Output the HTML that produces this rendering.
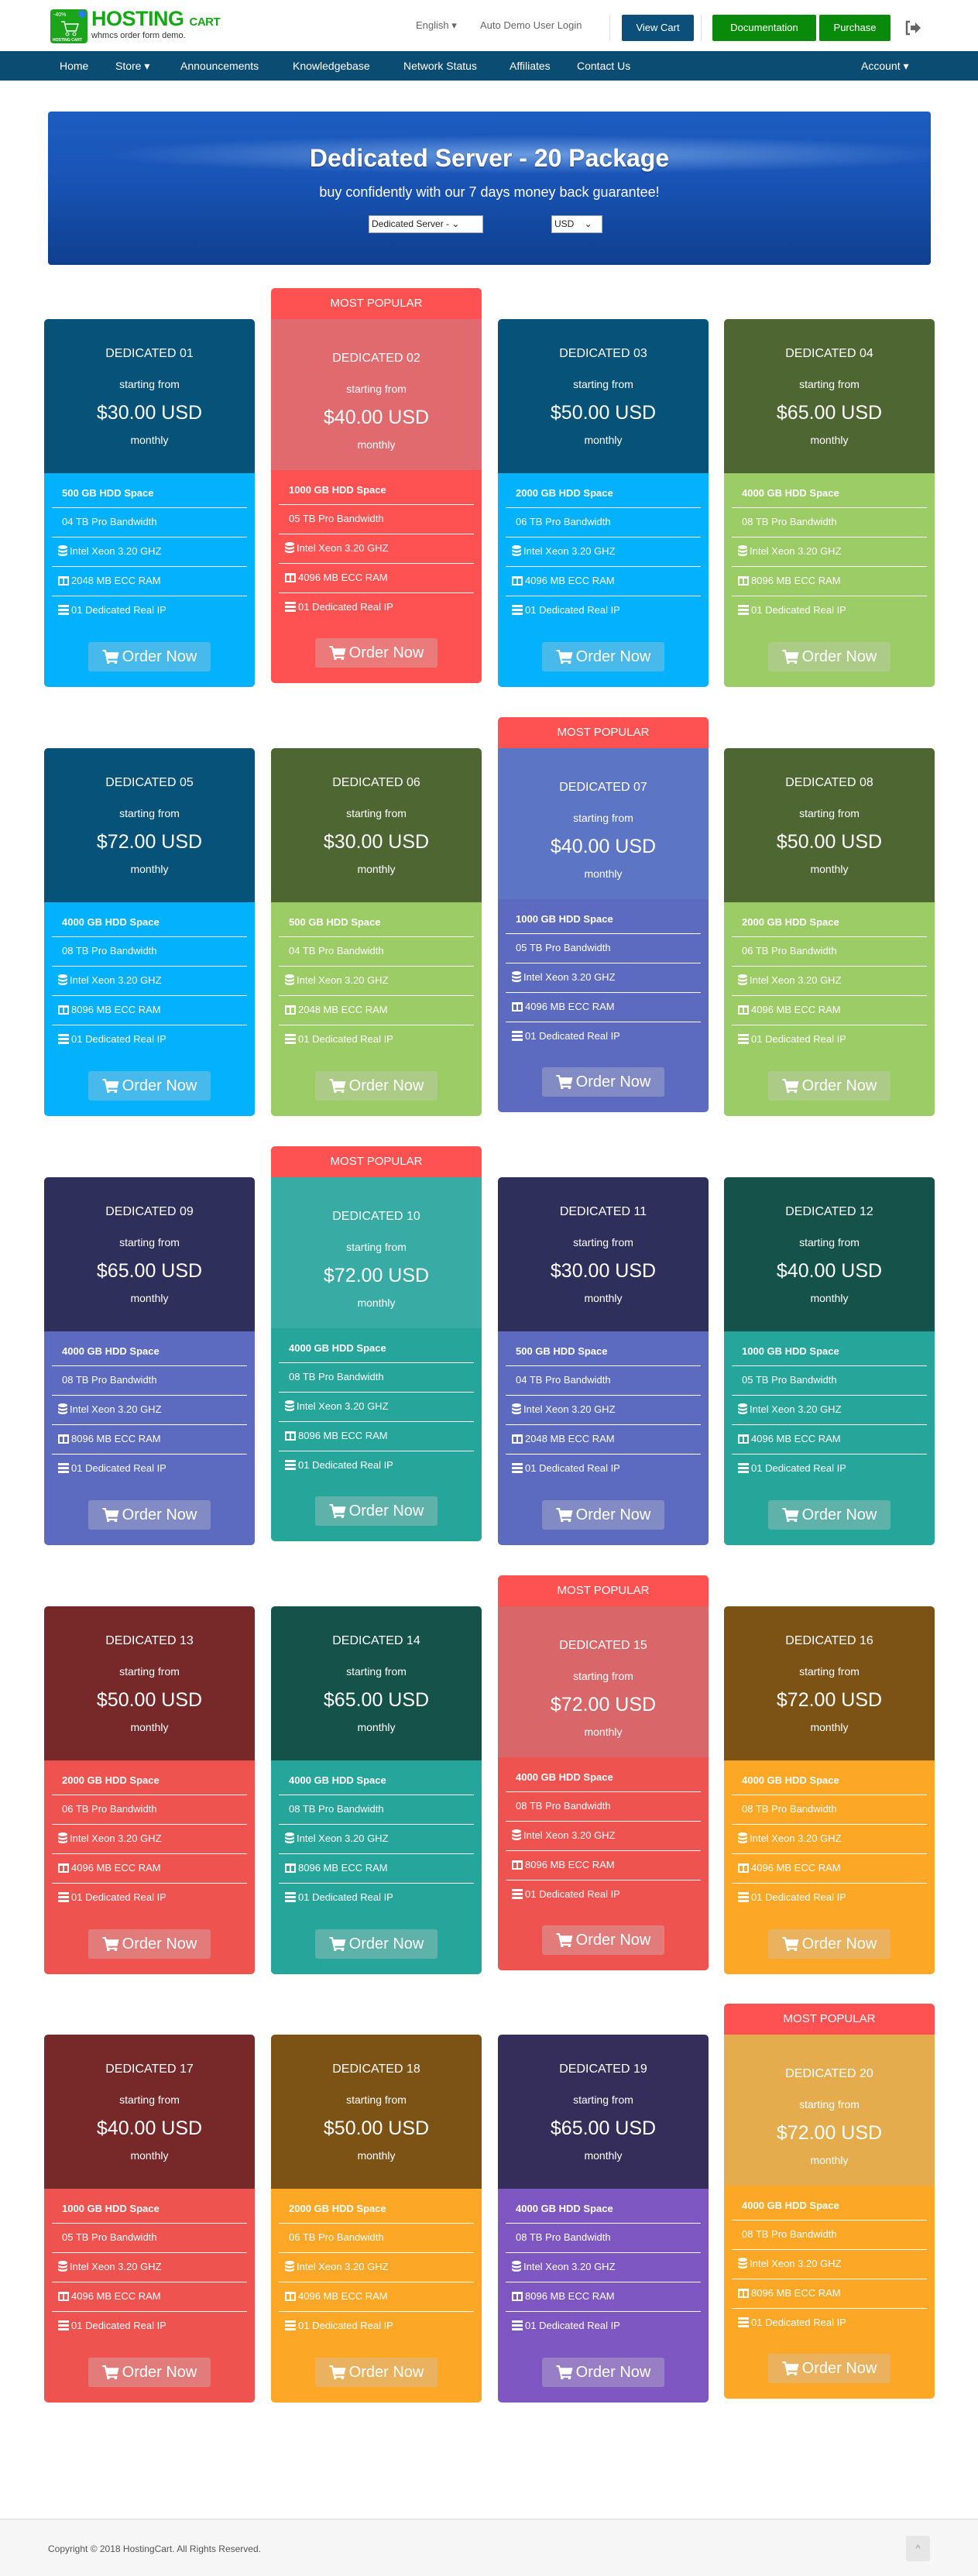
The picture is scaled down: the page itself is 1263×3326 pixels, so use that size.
<!DOCTYPE html>
<html><head><meta charset="utf-8">
<style>
*{box-sizing:border-box;margin:0;padding:0}
body{width:1263px;height:3326px;position:relative;background:#fff;font-family:"Liberation Sans",sans-serif;color:#fff;overflow:hidden}
.abs{position:absolute}
.logo{left:65px;top:12px;width:48px;height:44px;background:#1aa51a;border-radius:4px}
.brand{left:118px;top:9px;color:#13a913;font-weight:bold;font-size:27px;letter-spacing:-0.5px}
.brand small{font-size:15px}
.tag{left:118px;top:40px;color:#333;font-size:11px}
.tl{top:25px;font-size:13px;color:#666}
.btn{top:19px;height:34px;line-height:34px;font-size:13px;color:#fff;text-align:center;border-radius:2px}
.sep{top:19px;width:1px;height:34px;background:#ddd}
.nav{left:0;top:66px;width:1263px;height:38px;background:#0b4c72}
.nav span{position:absolute;top:11px;font-size:14px;color:#fff}
.banner{left:62px;top:144px;width:1140px;height:198px;border-radius:4px;overflow:hidden;
background:radial-gradient(ellipse 70% 18% at 55% 28%,rgba(170,210,255,.55),rgba(90,150,230,0) 70%),linear-gradient(180deg,#1d5cc0 0%,#1a55b8 40%,#134aa3 70%,#0f3f8e 100%)}
.banner h1{position:absolute;top:42px;width:100%;text-align:center;font-size:32px;font-weight:bold;text-shadow:0 1px 2px rgba(0,0,0,.4)}
.banner p{position:absolute;top:94px;width:100%;text-align:center;font-size:18px}
.sel{position:absolute;top:134px;height:23px;background:#fff;border:1px solid #aaa;color:#222;font-size:12px;line-height:21px;padding-left:3px}
.card{position:absolute;width:272px;border-radius:5px;overflow:visible}
.hd{position:relative;height:199px;border-radius:5px 5px 0 0;text-align:center}
.hd .t{position:absolute;top:36px;width:100%;font-size:16px}
.hd .s{position:absolute;top:76px;width:100%;font-size:14px}
.hd .p{position:absolute;top:107px;width:100%;font-size:25px}
.hd .m{position:absolute;top:148px;width:100%;font-size:14px}
.bd{position:relative;height:276px;border-radius:0 0 5px 5px}
.f{position:absolute;left:10px;width:252px;height:38px;line-height:36px;font-size:13px;padding-left:13px}
.f.b{border-bottom:1px solid #fff}
.f svg{vertical-align:-2px;margin-right:3px;margin-left:-5px}
.ob{position:absolute;left:57px;top:218px;width:158px;height:38px;border-radius:3px;background:rgba(200,200,200,.35);font-size:20px;line-height:38px;text-align:center}
.ob svg{vertical-align:-3px;margin-right:4px}
.tab{position:absolute;top:-40px;left:0;width:272px;height:40px;background:#fe5252;border-radius:5px 5px 0 0;text-align:center;line-height:40px;font-size:15px}
.pop .hd{height:195px;border-radius:0}
.pop .hd .t{top:42px}.pop .hd .s{top:82px}.pop .hd .p{top:113px}.pop .hd .m{top:154px}
.pop .bd{height:275px}
.pop .ob{top:217px}
.footer{left:0;top:3252px;width:1263px;height:74px;background:#f6f6f6;border-top:1px solid #ddd}
</style></head><body>
<div class="abs logo"><svg width="48" height="44" viewBox="0 0 48 44"><text x="4" y="9" font-size="7" fill="#fff" font-family="Liberation Sans">-40%</text><circle cx="41" cy="6" r="5" fill="#2a7de1"/><path d="M14 16h4l3 12h12l3-9H19" stroke="#fff" stroke-width="1.5" fill="none"/><circle cx="22" cy="32" r="2" fill="none" stroke="#fff"/><circle cx="31" cy="32" r="2" fill="none" stroke="#fff"/><text x="3" y="41" font-size="5" fill="#fff" font-family="Liberation Sans" font-weight="bold">HOSTING CART</text></svg></div>
<div class="abs brand">HOSTING <small>CART</small></div>
<div class="abs tag">whmcs order form demo.</div>
<div class="abs tl" style="left:537px">English ▾</div>
<div class="abs tl" style="left:620px">Auto Demo User Login</div>
<div class="abs sep" style="left:787px"></div>
<div class="abs btn" style="left:803px;width:93px;background:#0b4f7a">View Cart</div>
<div class="abs sep" style="left:905px"></div>
<div class="abs btn" style="left:920px;width:134px;background:#0a8a0a">Documentation</div>
<div class="abs btn" style="left:1058px;width:92px;background:#0a8a0a">Purchase</div>
<svg class="abs" style="left:1168px;top:26px" width="22" height="20" viewBox="0 0 22 20"><path d="M7 2H3v16h4" stroke="#666" stroke-width="2.5" fill="none"/><path d="M8 7h6V3l7 7-7 7v-4H8z" fill="#666"/></svg>
<div class="abs nav"><span style="left:77px">Home</span><span style="left:149px">Store ▾</span><span style="left:233px">Announcements</span><span style="left:378px">Knowledgebase</span><span style="left:521px">Network Status</span><span style="left:658px">Affiliates</span><span style="left:745px">Contact Us</span><span style="left:1112px">Account ▾</span></div>
<div class="abs banner"><h1>Dedicated Server - 20 Package</h1><p>buy confidently with our 7 days money back guarantee!</p>
<div class="sel" style="left:414px;width:148px">Dedicated Server - ⌄</div><div class="sel" style="left:650px;width:66px">USD &nbsp;&nbsp;&nbsp;⌄</div></div>

<svg width="0" height="0" style="position:absolute"><defs>
<symbol id="db" viewBox="0 0 12 14"><ellipse cx="6" cy="2.5" rx="6" ry="2.5" fill="#fff"/><path d="M0 4.5c0 1.4 2.7 2.5 6 2.5s6-1.1 6-2.5V7c0 1.4-2.7 2.5-6 2.5S0 8.4 0 7zM0 9c0 1.4 2.7 2.5 6 2.5S12 10.4 12 9v2.5C12 12.9 9.3 14 6 14s-6-1.1-6-2.5z" fill="#fff"/></symbol>
<symbol id="col" viewBox="0 0 14 12"><path d="M0 0h14v12H0zM2 3v7h4V3zM8 3v7h4V3z" fill="#fff" fill-rule="evenodd"/></symbol>
<symbol id="srv" viewBox="0 0 14 13"><path d="M0 0h14v3H0zM0 5h14v3H0zM0 10h14v3H0z" fill="#fff"/></symbol>
<symbol id="cart" viewBox="0 0 20 18"><path d="M0 1h4l1 3h15l-2 8H6.5l.5 2h11v2H5.5L2.5 3H0z" fill="#fff"/><circle cx="7" cy="17" r="1.6" fill="#fff"/><circle cx="16" cy="17" r="1.6" fill="#fff"/></symbol>
</defs></svg>

<!-- ROW 1 -->
<div class="card" style="left:57px;top:412px"><div class="hd" style="background:#065279"><div class="t">DEDICATED 01</div><div class="s">starting from</div><div class="p">$30.00 USD</div><div class="m">monthly</div></div><div class="bd" style="background:#03b1fc"><div class="f b" style="top:8px;height:37px;font-weight:bold">500 GB HDD Space</div><div class="f b" style="top:45px">04 TB Pro Bandwidth</div><div class="f b" style="top:83px"><svg width="12" height="14"><use href="#db"/></svg>Intel Xeon 3.20 GHZ</div><div class="f b" style="top:121px"><svg width="14" height="12"><use href="#col"/></svg>2048 MB ECC RAM</div><div class="f" style="top:159px"><svg width="14" height="13"><use href="#srv"/></svg>01 Dedicated Real IP</div><div class="ob"><svg width="22" height="19"><use href="#cart"/></svg>Order Now</div></div></div>
<div class="card pop" style="left:350px;top:412px"><div class="tab">MOST POPULAR</div><div class="hd" style="background:#e06a6e"><div class="t">DEDICATED 02</div><div class="s">starting from</div><div class="p">$40.00 USD</div><div class="m">monthly</div></div><div class="bd" style="background:#fe5252"><div class="f b" style="top:8px;height:37px;font-weight:bold">1000 GB HDD Space</div><div class="f b" style="top:45px">05 TB Pro Bandwidth</div><div class="f b" style="top:83px"><svg width="12" height="14"><use href="#db"/></svg>Intel Xeon 3.20 GHZ</div><div class="f b" style="top:121px"><svg width="14" height="12"><use href="#col"/></svg>4096 MB ECC RAM</div><div class="f" style="top:159px"><svg width="14" height="13"><use href="#srv"/></svg>01 Dedicated Real IP</div><div class="ob"><svg width="22" height="19"><use href="#cart"/></svg>Order Now</div></div></div>
<div class="card" style="left:643px;top:412px"><div class="hd" style="background:#065279"><div class="t">DEDICATED 03</div><div class="s">starting from</div><div class="p">$50.00 USD</div><div class="m">monthly</div></div><div class="bd" style="background:#03b1fc"><div class="f b" style="top:8px;height:37px;font-weight:bold">2000 GB HDD Space</div><div class="f b" style="top:45px">06 TB Pro Bandwidth</div><div class="f b" style="top:83px"><svg width="12" height="14"><use href="#db"/></svg>Intel Xeon 3.20 GHZ</div><div class="f b" style="top:121px"><svg width="14" height="12"><use href="#col"/></svg>4096 MB ECC RAM</div><div class="f" style="top:159px"><svg width="14" height="13"><use href="#srv"/></svg>01 Dedicated Real IP</div><div class="ob"><svg width="22" height="19"><use href="#cart"/></svg>Order Now</div></div></div>
<div class="card" style="left:935px;top:412px"><div class="hd" style="background:#4e6631"><div class="t">DEDICATED 04</div><div class="s">starting from</div><div class="p">$65.00 USD</div><div class="m">monthly</div></div><div class="bd" style="background:#9ccc65"><div class="f b" style="top:8px;height:37px;font-weight:bold">4000 GB HDD Space</div><div class="f b" style="top:45px">08 TB Pro Bandwidth</div><div class="f b" style="top:83px"><svg width="12" height="14"><use href="#db"/></svg>Intel Xeon 3.20 GHZ</div><div class="f b" style="top:121px"><svg width="14" height="12"><use href="#col"/></svg>8096 MB ECC RAM</div><div class="f" style="top:159px"><svg width="14" height="13"><use href="#srv"/></svg>01 Dedicated Real IP</div><div class="ob"><svg width="22" height="19"><use href="#cart"/></svg>Order Now</div></div></div>

<!-- ROW 2 -->
<div class="card" style="left:57px;top:966px"><div class="hd" style="background:#065279"><div class="t">DEDICATED 05</div><div class="s">starting from</div><div class="p">$72.00 USD</div><div class="m">monthly</div></div><div class="bd" style="background:#03b1fc"><div class="f b" style="top:8px;height:37px;font-weight:bold">4000 GB HDD Space</div><div class="f b" style="top:45px">08 TB Pro Bandwidth</div><div class="f b" style="top:83px"><svg width="12" height="14"><use href="#db"/></svg>Intel Xeon 3.20 GHZ</div><div class="f b" style="top:121px"><svg width="14" height="12"><use href="#col"/></svg>8096 MB ECC RAM</div><div class="f" style="top:159px"><svg width="14" height="13"><use href="#srv"/></svg>01 Dedicated Real IP</div><div class="ob"><svg width="22" height="19"><use href="#cart"/></svg>Order Now</div></div></div>
<div class="card" style="left:350px;top:966px"><div class="hd" style="background:#4e6631"><div class="t">DEDICATED 06</div><div class="s">starting from</div><div class="p">$30.00 USD</div><div class="m">monthly</div></div><div class="bd" style="background:#9ccc65"><div class="f b" style="top:8px;height:37px;font-weight:bold">500 GB HDD Space</div><div class="f b" style="top:45px">04 TB Pro Bandwidth</div><div class="f b" style="top:83px"><svg width="12" height="14"><use href="#db"/></svg>Intel Xeon 3.20 GHZ</div><div class="f b" style="top:121px"><svg width="14" height="12"><use href="#col"/></svg>2048 MB ECC RAM</div><div class="f" style="top:159px"><svg width="14" height="13"><use href="#srv"/></svg>01 Dedicated Real IP</div><div class="ob"><svg width="22" height="19"><use href="#cart"/></svg>Order Now</div></div></div>
<div class="card pop" style="left:643px;top:966px"><div class="tab">MOST POPULAR</div><div class="hd" style="background:#5c75c4"><div class="t">DEDICATED 07</div><div class="s">starting from</div><div class="p">$40.00 USD</div><div class="m">monthly</div></div><div class="bd" style="background:#5c6bc0"><div class="f b" style="top:8px;height:37px;font-weight:bold">1000 GB HDD Space</div><div class="f b" style="top:45px">05 TB Pro Bandwidth</div><div class="f b" style="top:83px"><svg width="12" height="14"><use href="#db"/></svg>Intel Xeon 3.20 GHZ</div><div class="f b" style="top:121px"><svg width="14" height="12"><use href="#col"/></svg>4096 MB ECC RAM</div><div class="f" style="top:159px"><svg width="14" height="13"><use href="#srv"/></svg>01 Dedicated Real IP</div><div class="ob"><svg width="22" height="19"><use href="#cart"/></svg>Order Now</div></div></div>
<div class="card" style="left:935px;top:966px"><div class="hd" style="background:#4e6631"><div class="t">DEDICATED 08</div><div class="s">starting from</div><div class="p">$50.00 USD</div><div class="m">monthly</div></div><div class="bd" style="background:#9ccc65"><div class="f b" style="top:8px;height:37px;font-weight:bold">2000 GB HDD Space</div><div class="f b" style="top:45px">06 TB Pro Bandwidth</div><div class="f b" style="top:83px"><svg width="12" height="14"><use href="#db"/></svg>Intel Xeon 3.20 GHZ</div><div class="f b" style="top:121px"><svg width="14" height="12"><use href="#col"/></svg>4096 MB ECC RAM</div><div class="f" style="top:159px"><svg width="14" height="13"><use href="#srv"/></svg>01 Dedicated Real IP</div><div class="ob"><svg width="22" height="19"><use href="#cart"/></svg>Order Now</div></div></div>

<!-- ROW 3 -->
<div class="card" style="left:57px;top:1520px"><div class="hd" style="background:#2f2f5c"><div class="t">DEDICATED 09</div><div class="s">starting from</div><div class="p">$65.00 USD</div><div class="m">monthly</div></div><div class="bd" style="background:#5c6bc0"><div class="f b" style="top:8px;height:37px;font-weight:bold">4000 GB HDD Space</div><div class="f b" style="top:45px">08 TB Pro Bandwidth</div><div class="f b" style="top:83px"><svg width="12" height="14"><use href="#db"/></svg>Intel Xeon 3.20 GHZ</div><div class="f b" style="top:121px"><svg width="14" height="12"><use href="#col"/></svg>8096 MB ECC RAM</div><div class="f" style="top:159px"><svg width="14" height="13"><use href="#srv"/></svg>01 Dedicated Real IP</div><div class="ob"><svg width="22" height="19"><use href="#cart"/></svg>Order Now</div></div></div>
<div class="card pop" style="left:350px;top:1520px"><div class="tab">MOST POPULAR</div><div class="hd" style="background:#38aba5"><div class="t">DEDICATED 10</div><div class="s">starting from</div><div class="p">$72.00 USD</div><div class="m">monthly</div></div><div class="bd" style="background:#26a69a"><div class="f b" style="top:8px;height:37px;font-weight:bold">4000 GB HDD Space</div><div class="f b" style="top:45px">08 TB Pro Bandwidth</div><div class="f b" style="top:83px"><svg width="12" height="14"><use href="#db"/></svg>Intel Xeon 3.20 GHZ</div><div class="f b" style="top:121px"><svg width="14" height="12"><use href="#col"/></svg>8096 MB ECC RAM</div><div class="f" style="top:159px"><svg width="14" height="13"><use href="#srv"/></svg>01 Dedicated Real IP</div><div class="ob"><svg width="22" height="19"><use href="#cart"/></svg>Order Now</div></div></div>
<div class="card" style="left:643px;top:1520px"><div class="hd" style="background:#2f2f5c"><div class="t">DEDICATED 11</div><div class="s">starting from</div><div class="p">$30.00 USD</div><div class="m">monthly</div></div><div class="bd" style="background:#5c6bc0"><div class="f b" style="top:8px;height:37px;font-weight:bold">500 GB HDD Space</div><div class="f b" style="top:45px">04 TB Pro Bandwidth</div><div class="f b" style="top:83px"><svg width="12" height="14"><use href="#db"/></svg>Intel Xeon 3.20 GHZ</div><div class="f b" style="top:121px"><svg width="14" height="12"><use href="#col"/></svg>2048 MB ECC RAM</div><div class="f" style="top:159px"><svg width="14" height="13"><use href="#srv"/></svg>01 Dedicated Real IP</div><div class="ob"><svg width="22" height="19"><use href="#cart"/></svg>Order Now</div></div></div>
<div class="card" style="left:935px;top:1520px"><div class="hd" style="background:#14524a"><div class="t">DEDICATED 12</div><div class="s">starting from</div><div class="p">$40.00 USD</div><div class="m">monthly</div></div><div class="bd" style="background:#26a69a"><div class="f b" style="top:8px;height:37px;font-weight:bold">1000 GB HDD Space</div><div class="f b" style="top:45px">05 TB Pro Bandwidth</div><div class="f b" style="top:83px"><svg width="12" height="14"><use href="#db"/></svg>Intel Xeon 3.20 GHZ</div><div class="f b" style="top:121px"><svg width="14" height="12"><use href="#col"/></svg>4096 MB ECC RAM</div><div class="f" style="top:159px"><svg width="14" height="13"><use href="#srv"/></svg>01 Dedicated Real IP</div><div class="ob"><svg width="22" height="19"><use href="#cart"/></svg>Order Now</div></div></div>

<!-- ROW 4 -->
<div class="card" style="left:57px;top:2074px"><div class="hd" style="background:#772828"><div class="t">DEDICATED 13</div><div class="s">starting from</div><div class="p">$50.00 USD</div><div class="m">monthly</div></div><div class="bd" style="background:#ef5350"><div class="f b" style="top:8px;height:37px;font-weight:bold">2000 GB HDD Space</div><div class="f b" style="top:45px">06 TB Pro Bandwidth</div><div class="f b" style="top:83px"><svg width="12" height="14"><use href="#db"/></svg>Intel Xeon 3.20 GHZ</div><div class="f b" style="top:121px"><svg width="14" height="12"><use href="#col"/></svg>4096 MB ECC RAM</div><div class="f" style="top:159px"><svg width="14" height="13"><use href="#srv"/></svg>01 Dedicated Real IP</div><div class="ob"><svg width="22" height="19"><use href="#cart"/></svg>Order Now</div></div></div>
<div class="card" style="left:350px;top:2074px"><div class="hd" style="background:#14524a"><div class="t">DEDICATED 14</div><div class="s">starting from</div><div class="p">$65.00 USD</div><div class="m">monthly</div></div><div class="bd" style="background:#26a69a"><div class="f b" style="top:8px;height:37px;font-weight:bold">4000 GB HDD Space</div><div class="f b" style="top:45px">08 TB Pro Bandwidth</div><div class="f b" style="top:83px"><svg width="12" height="14"><use href="#db"/></svg>Intel Xeon 3.20 GHZ</div><div class="f b" style="top:121px"><svg width="14" height="12"><use href="#col"/></svg>8096 MB ECC RAM</div><div class="f" style="top:159px"><svg width="14" height="13"><use href="#srv"/></svg>01 Dedicated Real IP</div><div class="ob"><svg width="22" height="19"><use href="#cart"/></svg>Order Now</div></div></div>
<div class="card pop" style="left:643px;top:2074px"><div class="tab">MOST POPULAR</div><div class="hd" style="background:#d9676a"><div class="t">DEDICATED 15</div><div class="s">starting from</div><div class="p">$72.00 USD</div><div class="m">monthly</div></div><div class="bd" style="background:#ef5350"><div class="f b" style="top:8px;height:37px;font-weight:bold">4000 GB HDD Space</div><div class="f b" style="top:45px">08 TB Pro Bandwidth</div><div class="f b" style="top:83px"><svg width="12" height="14"><use href="#db"/></svg>Intel Xeon 3.20 GHZ</div><div class="f b" style="top:121px"><svg width="14" height="12"><use href="#col"/></svg>8096 MB ECC RAM</div><div class="f" style="top:159px"><svg width="14" height="13"><use href="#srv"/></svg>01 Dedicated Real IP</div><div class="ob"><svg width="22" height="19"><use href="#cart"/></svg>Order Now</div></div></div>
<div class="card" style="left:935px;top:2074px"><div class="hd" style="background:#7d5215"><div class="t">DEDICATED 16</div><div class="s">starting from</div><div class="p">$72.00 USD</div><div class="m">monthly</div></div><div class="bd" style="background:#fca726"><div class="f b" style="top:8px;height:37px;font-weight:bold">4000 GB HDD Space</div><div class="f b" style="top:45px">08 TB Pro Bandwidth</div><div class="f b" style="top:83px"><svg width="12" height="14"><use href="#db"/></svg>Intel Xeon 3.20 GHZ</div><div class="f b" style="top:121px"><svg width="14" height="12"><use href="#col"/></svg>4096 MB ECC RAM</div><div class="f" style="top:159px"><svg width="14" height="13"><use href="#srv"/></svg>01 Dedicated Real IP</div><div class="ob"><svg width="22" height="19"><use href="#cart"/></svg>Order Now</div></div></div>

<!-- ROW 5 -->
<div class="card" style="left:57px;top:2627px"><div class="hd" style="background:#772828"><div class="t">DEDICATED 17</div><div class="s">starting from</div><div class="p">$40.00 USD</div><div class="m">monthly</div></div><div class="bd" style="background:#ef5350"><div class="f b" style="top:8px;height:37px;font-weight:bold">1000 GB HDD Space</div><div class="f b" style="top:45px">05 TB Pro Bandwidth</div><div class="f b" style="top:83px"><svg width="12" height="14"><use href="#db"/></svg>Intel Xeon 3.20 GHZ</div><div class="f b" style="top:121px"><svg width="14" height="12"><use href="#col"/></svg>4096 MB ECC RAM</div><div class="f" style="top:159px"><svg width="14" height="13"><use href="#srv"/></svg>01 Dedicated Real IP</div><div class="ob"><svg width="22" height="19"><use href="#cart"/></svg>Order Now</div></div></div>
<div class="card" style="left:350px;top:2627px"><div class="hd" style="background:#7d5215"><div class="t">DEDICATED 18</div><div class="s">starting from</div><div class="p">$50.00 USD</div><div class="m">monthly</div></div><div class="bd" style="background:#fca726"><div class="f b" style="top:8px;height:37px;font-weight:bold">2000 GB HDD Space</div><div class="f b" style="top:45px">06 TB Pro Bandwidth</div><div class="f b" style="top:83px"><svg width="12" height="14"><use href="#db"/></svg>Intel Xeon 3.20 GHZ</div><div class="f b" style="top:121px"><svg width="14" height="12"><use href="#col"/></svg>4096 MB ECC RAM</div><div class="f" style="top:159px"><svg width="14" height="13"><use href="#srv"/></svg>01 Dedicated Real IP</div><div class="ob"><svg width="22" height="19"><use href="#cart"/></svg>Order Now</div></div></div>
<div class="card" style="left:643px;top:2627px"><div class="hd" style="background:#352d5a"><div class="t">DEDICATED 19</div><div class="s">starting from</div><div class="p">$65.00 USD</div><div class="m">monthly</div></div><div class="bd" style="background:#7e57c2"><div class="f b" style="top:8px;height:37px;font-weight:bold">4000 GB HDD Space</div><div class="f b" style="top:45px">08 TB Pro Bandwidth</div><div class="f b" style="top:83px"><svg width="12" height="14"><use href="#db"/></svg>Intel Xeon 3.20 GHZ</div><div class="f b" style="top:121px"><svg width="14" height="12"><use href="#col"/></svg>8096 MB ECC RAM</div><div class="f" style="top:159px"><svg width="14" height="13"><use href="#srv"/></svg>01 Dedicated Real IP</div><div class="ob"><svg width="22" height="19"><use href="#cart"/></svg>Order Now</div></div></div>
<div class="card pop" style="left:935px;top:2627px"><div class="tab">MOST POPULAR</div><div class="hd" style="background:#e4ac4c"><div class="t">DEDICATED 20</div><div class="s">starting from</div><div class="p">$72.00 USD</div><div class="m">monthly</div></div><div class="bd" style="background:#fca726"><div class="f b" style="top:8px;height:37px;font-weight:bold">4000 GB HDD Space</div><div class="f b" style="top:45px">08 TB Pro Bandwidth</div><div class="f b" style="top:83px"><svg width="12" height="14"><use href="#db"/></svg>Intel Xeon 3.20 GHZ</div><div class="f b" style="top:121px"><svg width="14" height="12"><use href="#col"/></svg>8096 MB ECC RAM</div><div class="f" style="top:159px"><svg width="14" height="13"><use href="#srv"/></svg>01 Dedicated Real IP</div><div class="ob"><svg width="22" height="19"><use href="#cart"/></svg>Order Now</div></div></div>

<div class="abs footer"><div class="abs" style="left:62px;top:31px;font-size:12px;color:#555">Copyright © 2018 HostingCart. All Rights Reserved.</div><div class="abs" style="left:1170px;top:21px;width:31px;height:33px;background:#e6e6e6;border-radius:3px;color:#999;text-align:center;line-height:33px;font-size:13px">^</div></div>
</body></html>
